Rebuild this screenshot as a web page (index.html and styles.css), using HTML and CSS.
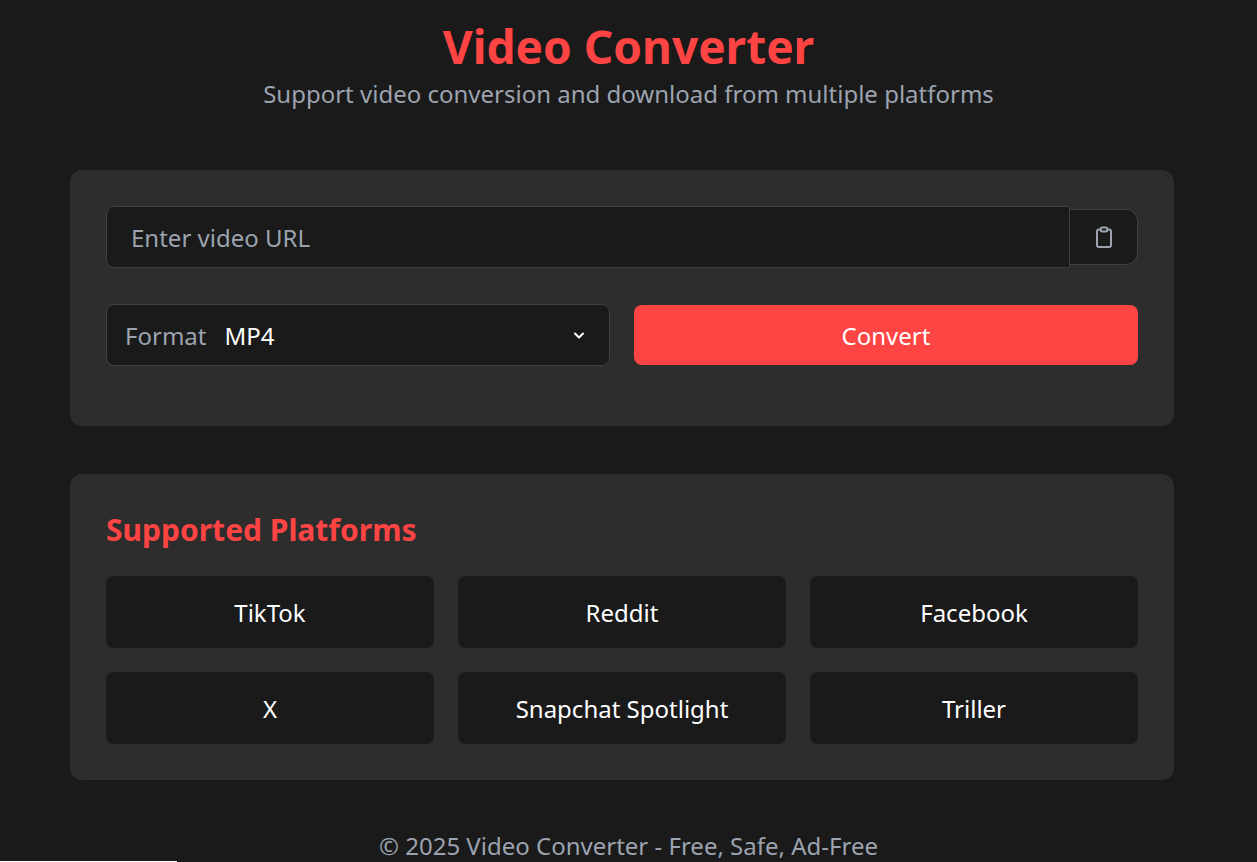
FILE: index.html
```html
<!DOCTYPE html>
<html lang="en">
<head>
    <meta charset="UTF-8">
    <meta name="viewport" content="width=device-width, initial-scale=1.0">
    <title>Video Converter</title>
    <link rel="stylesheet" href="styles.css">
</head>
<body>
    <header class="page-header">
        <h1>Video Converter</h1>
        <p>Support video conversion and download from multiple platforms</p>
    </header>
    <main>
        <section class="card convert-card">
            <div class="url-row">
                <input class="url-input" type="text" placeholder="Enter video URL">
                <button class="paste-btn" type="button" aria-label="Paste">
                    <svg width="24" height="24" viewBox="0 0 24 24" fill="none" stroke="#9ca3af" stroke-width="2" stroke-linecap="round" stroke-linejoin="round">
                        <path d="M8.5 4.5H7a2 2 0 0 0-2 2V20a2 2 0 0 0 2 2h10a2 2 0 0 0 2-2V6.500a2 2 0 0 0-2-2h-1.500"/>
                        <rect x="8.500" y="2.500" width="7" height="4" rx="2"/>
                    </svg>
                </button>
            </div>
            <div class="action-row">
                <div class="format-select">
                    <span class="format-label">Format</span>
                    <span class="format-value">MP4</span>
                    <svg class="chevron" width="16" height="16" viewBox="0 0 16 16" fill="none" stroke="#fff" stroke-width="2" stroke-linecap="round" stroke-linejoin="round">
                        <path d="M4 6.500l4 4 4-4"/>
                    </svg>
                </div>
                <button class="convert-btn" type="button">Convert</button>
            </div>
        </section>
        <section class="card platforms-card">
            <h2>Supported Platforms</h2>
            <div class="platform-grid">
                <div class="platform">TikTok</div>
                <div class="platform">Reddit</div>
                <div class="platform">Facebook</div>
                <div class="platform">X</div>
                <div class="platform">Snapchat Spotlight</div>
                <div class="platform">Triller</div>
            </div>
        </section>
    </main>
    <footer>&copy; 2025 Video Converter - Free, Safe, Ad-Free</footer>
    <div class="bottom-edge"></div>
</body>
</html>
```

FILE: styles.css
```css
/* Global Styles */
* {
    box-sizing: border-box;
}
html, body {
    height: 862px;
    overflow: hidden;
}
body {
    font-family: "Noto Sans", "Open Sans", sans-serif;
    margin: 0;
    padding: 0;
    background: #1a1a1a;
    color: #fff;
    position: relative;
}
.page-header {
    text-align: center;
    padding-top: 16px;
}
.page-header h1 {
    margin: 0;
    height: 60px;
    line-height: 60px;
    font-size: 46px;
    font-weight: 700;
    color: #ff4444;
}
.page-header p {
    margin: 0;
    height: 40px;
    line-height: 36px;
    font-size: 24px;
    color: #9ca3af;
}
main {
    margin: 54px 83px 0 70px;
}
.card {
    background: #2d2d2d;
    border-radius: 12px;
    padding: 36px;
}
.convert-card {
    height: 256px;
    margin-bottom: 48px;
}
.url-row {
    display: flex;
    align-items: center;
    margin-bottom: 36px;
}
.url-input {
    flex: 1;
    height: 62px;
    padding: 0 24px;
    font-family: inherit;
    font-size: 24px;
    color: #fff;
    background: #1a1a1a;
    border: 1px solid #404040;
    border-radius: 8px 0 0 8px;
    border-top-right-radius: 0;
    outline: none;
}
.url-input::placeholder {
    color: #9ca3af;
    opacity: 1;
}
.paste-btn {
    width: 68px;
    height: 56px;
    display: flex;
    align-items: center;
    justify-content: center;
    padding: 0;
    background: #1a1a1a;
    border: 1px solid #404040;
    border-left: 0;
    border-radius: 0 12px 12px 0;
}
.action-row {
    display: grid;
    grid-template-columns: 1fr 1fr;
    gap: 24px;
    align-items: center;
}
.format-select {
    height: 62px;
    display: flex;
    align-items: center;
    padding: 0 22px 0 18px;
    font-size: 24px;
    background: #1a1a1a;
    border: 1px solid #404040;
    border-radius: 8px;
}
.format-label {
    color: #9ca3af;
    margin-right: 18px;
}
.chevron {
    margin-left: auto;
}
.convert-btn {
    height: 60px;
    font-family: inherit;
    font-size: 24px;
    color: #fff;
    background: #ff4444;
    border: 0;
    border-radius: 8px;
}
.platforms-card {
    height: 306px;
    padding-top: 34px;
}
.platforms-card h2 {
    margin: 0 0 24px;
    height: 44px;
    line-height: 44px;
    font-size: 30px;
    font-weight: 700;
    color: #ff4444;
}
.platform-grid {
    display: grid;
    grid-template-columns: repeat(3, 1fr);
    gap: 24px;
}
.platform {
    height: 72px;
    display: flex;
    align-items: center;
    justify-content: center;
    font-size: 24px;
    background: #1a1a1a;
    border-radius: 8px;
}
footer {
    text-align: center;
    margin-top: 48px;
    font-size: 24px;
    line-height: 36px;
    color: #9ca3af;
}
.bottom-edge {
    position: absolute;
    left: 0;
    bottom: 0;
    width: 177px;
    height: 1px;
    background: #fff;
}
```
